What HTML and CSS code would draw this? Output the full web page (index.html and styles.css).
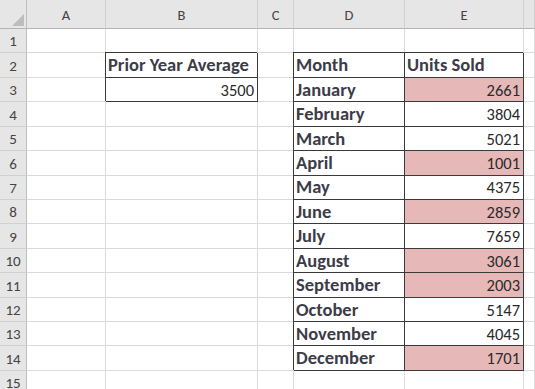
FILE: index.html
```html
<!DOCTYPE html>
<html>
<head>
<meta charset="utf-8">
<link rel="stylesheet" href="styles.css">
</head>
<body>
<div class="sheet">
  <div class="corner"><svg class="tri" width="12" height="12" viewBox="0 0 12 12"><polygon points="12,0 12,12 0,12" fill="#bdbdbd"/></svg></div>
  <div class="ch">A</div><div class="ch">B</div><div class="ch">C</div><div class="ch">D</div><div class="ch">E</div><div class="ch last"></div>

  <div class="rh">1</div><div class="c"></div><div class="c"></div><div class="c"></div><div class="c"></div><div class="c"></div><div class="c last"></div>

  <div class="rh">2</div><div class="c"></div><div class="c b hd">Prior Year Average</div><div class="c"></div><div class="c b hd">Month</div><div class="c b hd">Units Sold</div><div class="c last"></div>

  <div class="rh">3</div><div class="c"></div><div class="c b num">3500</div><div class="c"></div><div class="c b hd">January</div><div class="c b num pink">2661</div><div class="c last"></div>

  <div class="rh">4</div><div class="c"></div><div class="c"></div><div class="c"></div><div class="c b hd">February</div><div class="c b num">3804</div><div class="c last"></div>

  <div class="rh">5</div><div class="c"></div><div class="c"></div><div class="c"></div><div class="c b hd">March</div><div class="c b num">5021</div><div class="c last"></div>

  <div class="rh">6</div><div class="c"></div><div class="c"></div><div class="c"></div><div class="c b hd">April</div><div class="c b num pink">1001</div><div class="c last"></div>

  <div class="rh">7</div><div class="c"></div><div class="c"></div><div class="c"></div><div class="c b hd">May</div><div class="c b num">4375</div><div class="c last"></div>

  <div class="rh">8</div><div class="c"></div><div class="c"></div><div class="c"></div><div class="c b hd">June</div><div class="c b num pink">2859</div><div class="c last"></div>

  <div class="rh">9</div><div class="c"></div><div class="c"></div><div class="c"></div><div class="c b hd">July</div><div class="c b num">7659</div><div class="c last"></div>

  <div class="rh">10</div><div class="c"></div><div class="c"></div><div class="c"></div><div class="c b hd">August</div><div class="c b num pink">3061</div><div class="c last"></div>

  <div class="rh">11</div><div class="c"></div><div class="c"></div><div class="c"></div><div class="c b hd">September</div><div class="c b num pink">2003</div><div class="c last"></div>

  <div class="rh">12</div><div class="c"></div><div class="c"></div><div class="c"></div><div class="c b hd">October</div><div class="c b num">5147</div><div class="c last"></div>

  <div class="rh">13</div><div class="c"></div><div class="c"></div><div class="c"></div><div class="c b hd">November</div><div class="c b num">4045</div><div class="c last"></div>

  <div class="rh">14</div><div class="c"></div><div class="c"></div><div class="c"></div><div class="c b hd">December</div><div class="c b num pink">1701</div><div class="c last"></div>

  <div class="rh">15</div><div class="c"></div><div class="c"></div><div class="c"></div><div class="c"></div><div class="c"></div><div class="c last"></div>
</div>
</body>
</html>
```

FILE: styles.css
```css
html, body {
  margin: 0;
  padding: 0;
  background: #ffffff;
  overflow: hidden;
}

.sheet {
  display: grid;
  grid-template-columns: 27px 79px 152px 36px 111px 119px 1fr;
  grid-template-rows: 29px repeat(15, 24.43px);
  width: 535px;
  height: 389px;
  overflow: hidden;
  font-family: Carlito, "Open Sans", "Liberation Sans", sans-serif;
  font-size: 16.5px;
  color: #333333;
}

.corner {
  background: #e6e6e6;
  border-right: 1px solid #bdbdbd;
  border-bottom: 1px solid #b4b4b4;
  display: flex;
  align-items: flex-end;
  justify-content: flex-end;
  padding: 0 2px 2px 0;
}

.ch {
  background: #e6e6e6;
  border-right: 1px solid #d0d0d0;
  border-bottom: 1px solid #b4b4b4;
  display: flex;
  align-items: flex-end;
  justify-content: center;
  color: #444444;
  font-size: 14.5px;
  line-height: 1;
  padding-bottom: 6px;
}

.rh {
  background: #e6e6e6;
  border-right: 1px solid #bdbdbd;
  border-bottom: 1px solid #d0d0d0;
  display: flex;
  align-items: flex-end;
  justify-content: center;
  padding-bottom: 3px;
  color: #444444;
  font-size: 15px;
  line-height: 1;
}

.c {
  border-right: 1px solid #dadada;
  border-bottom: 1px solid #dadada;
  display: flex;
  align-items: flex-end;
  padding: 0 3px 3px 3px;
  line-height: 1;
  white-space: nowrap;
  overflow: hidden;
}

.b {
  border-right-color: #3a3a3a;
  border-bottom-color: #3a3a3a;
  box-shadow: -1px -1px 0 #3a3a3a;
}

.hd {
  font-weight: bold;
  font-size: 18.5px;
  color: #3c3c48;
  padding-left: 2px;
  padding-bottom: 2px;
}

.num {
  justify-content: flex-end;
  color: #2a2a2a;
}

.pink {
  background: #e6b8b7;
}
```
